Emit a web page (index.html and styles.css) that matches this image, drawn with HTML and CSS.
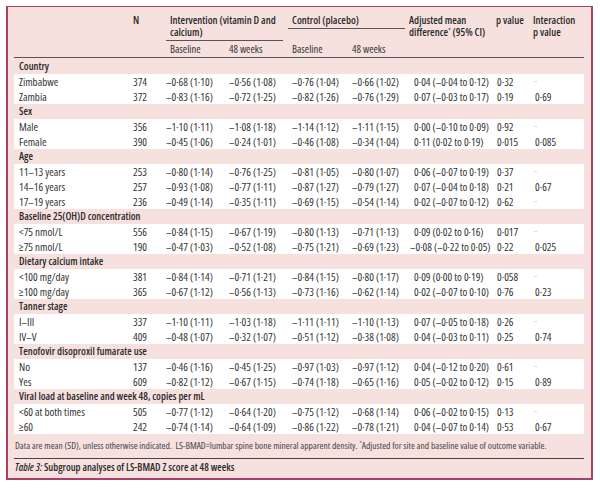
FILE: index.html
```html
<!DOCTYPE html>
<html lang="en">
<head>
<meta charset="utf-8">
<title>Table 3</title>
<link rel="stylesheet" href="styles.css">
</head>
<body>
<div class="panel">
  <table class="data">
    <colgroup>
      <col class="c-label"><col class="c-n"><col class="c-ib"><col class="c-iw"><col class="c-cb"><col class="c-cw"><col class="c-adj"><col class="c-p"><col class="c-int">
    </colgroup>
    <thead>
      <tr class="head1">
        <th rowspan="2" class="hcell"></th>
        <th rowspan="2" class="hcell">N</th>
        <th colspan="2" class="group"><div class="group-label int">Intervention (vitamin D and<br>calcium)</div></th>
        <th colspan="2" class="group"><div class="group-label ctl">Control (placebo)</div></th>
        <th rowspan="2" class="hcell pad4">Adjusted mean<br>difference<sup>*</sup> (95% CI)</th>
        <th rowspan="2" class="hcell">p value</th>
        <th rowspan="2" class="hcell">Interaction<br>p value</th>
      </tr>
      <tr class="head2">
        <th class="pad4">Baseline</th>
        <th>48 weeks</th>
        <th class="pad4">Baseline</th>
        <th>48 weeks</th>
      </tr>
    </thead>
    <tbody>
      <tr class="section first"><th colspan="9">Country</th></tr>
      <tr class="row"><td class="label">Zimbabwe</td><td>374</td><td>–0·68 (1·10)</td><td>–0·56 (1·08)</td><td class="pad4">–0·76 (1·04)</td><td>–0·66 (1·02)</td><td class="pos">0·04 (–0·04 to 0·12)</td><td class="pv">0·32</td><td class="na">··</td></tr>
      <tr class="row"><td class="label">Zambia</td><td>372</td><td>–0·83 (1·16)</td><td>–0·72 (1·25)</td><td class="pad4">–0·82 (1·26)</td><td>–0·76 (1·29)</td><td class="pos">0·07 (–0·03 to 0·17)</td><td class="pv">0·19</td><td class="iv">0·69</td></tr>

      <tr class="section"><th colspan="9">Sex</th></tr>
      <tr class="row"><td class="label">Male</td><td>356</td><td>–1·10 (1·11)</td><td>–1·08 (1·18)</td><td class="pad4">–1·14 (1·12)</td><td>–1·11 (1·15)</td><td class="pos">0·00 (–0·10 to 0·09)</td><td class="pv">0·92</td><td class="na">··</td></tr>
      <tr class="row"><td class="label">Female</td><td>390</td><td>–0·45 (1·06)</td><td>–0·24 (1·01)</td><td class="pad4">–0·46 (1·08)</td><td>–0·34 (1·04)</td><td class="pos">0·11 (0·02 to 0·19)</td><td class="pv">0·015</td><td class="iv">0·085</td></tr>

      <tr class="section"><th colspan="9">Age</th></tr>
      <tr class="row"><td class="label">11–13 years</td><td>253</td><td>–0·80 (1·14)</td><td>–0·76 (1·25)</td><td class="pad4">–0·81 (1·05)</td><td>–0·80 (1·07)</td><td class="pos">0·06 (–0·07 to 0·19)</td><td class="pv">0·37</td><td class="na">··</td></tr>
      <tr class="row"><td class="label">14–16 years</td><td>257</td><td>–0·93 (1·08)</td><td>–0·77 (1·11)</td><td class="pad4">–0·87 (1·27)</td><td>–0·79 (1·27)</td><td class="pos">0·07 (–0·04 to 0·18)</td><td class="pv">0·21</td><td class="iv">0·67</td></tr>
      <tr class="row"><td class="label">17–19 years</td><td>236</td><td>–0·49 (1·14)</td><td>–0·35 (1·11)</td><td class="pad4">–0·69 (1·15)</td><td>–0·54 (1·14)</td><td class="pos">0·02 (–0·07 to 0·12)</td><td class="pv">0·62</td><td class="na">··</td></tr>

      <tr class="section"><th colspan="9">Baseline 25(OH)D concentration</th></tr>
      <tr class="row"><td class="label">&lt;75 nmol/L</td><td>556</td><td>–0·84 (1·15)</td><td>–0·67 (1·19)</td><td class="pad4">–0·80 (1·13)</td><td>–0·71 (1·13)</td><td class="pos">0·09 (0·02 to 0·16)</td><td class="pv">0·017</td><td class="na">··</td></tr>
      <tr class="row"><td class="label">≥75 nmol/L</td><td>190</td><td>–0·47 (1·03)</td><td>–0·52 (1·08)</td><td class="pad4">–0·75 (1·21)</td><td>–0·69 (1·23)</td><td class="neg">–0·08 (–0·22 to 0·05)</td><td class="pv">0·22</td><td class="iv">0·025</td></tr>

      <tr class="section"><th colspan="9">Dietary calcium intake</th></tr>
      <tr class="row"><td class="label">&lt;100 mg/day</td><td>381</td><td>–0·84 (1·14)</td><td>–0·71 (1·21)</td><td class="pad4">–0·84 (1·15)</td><td>–0·80 (1·17)</td><td class="pos">0·09 (0·00 to 0·19)</td><td class="pv">0·058</td><td class="na">··</td></tr>
      <tr class="row"><td class="label">≥100 mg/day</td><td>365</td><td>–0·67 (1·12)</td><td>–0·56 (1·13)</td><td class="pad4">–0·73 (1·16)</td><td>–0·62 (1·14)</td><td class="pos">0·02 (–0·07 to 0·10)</td><td class="pv">0·76</td><td class="iv">0·23</td></tr>

      <tr class="section"><th colspan="9">Tanner stage</th></tr>
      <tr class="row"><td class="label">I–III</td><td>337</td><td>–1·10 (1·11)</td><td>–1·03 (1·18)</td><td class="pad4">–1·11 (1·11)</td><td>–1·10 (1·13)</td><td class="pos">0·07 (–0·05 to 0·18)</td><td class="pv">0·26</td><td class="na">··</td></tr>
      <tr class="row"><td class="label">IV–V</td><td>409</td><td>–0·48 (1·07)</td><td>–0·32 (1·07)</td><td class="pad4">–0·51 (1·12)</td><td>–0·38 (1·08)</td><td class="pos">0·04 (–0·03 to 0·11)</td><td class="pv">0·25</td><td class="iv">0·74</td></tr>

      <tr class="section"><th colspan="9">Tenofovir disoproxil fumarate use</th></tr>
      <tr class="row"><td class="label">No</td><td>137</td><td>–0·46 (1·16)</td><td>–0·45 (1·25)</td><td class="pad4">–0·97 (1·03)</td><td>–0·97 (1·12)</td><td class="pos">0·04 (–0·12 to 0·20)</td><td class="pv">0·61</td><td class="na">··</td></tr>
      <tr class="row"><td class="label">Yes</td><td>609</td><td>–0·82 (1·12)</td><td>–0·67 (1·15)</td><td class="pad4">–0·74 (1·18)</td><td>–0·65 (1·16)</td><td class="pos">0·05 (–0·02 to 0·12)</td><td class="pv">0·15</td><td class="iv">0·89</td></tr>

      <tr class="section"><th colspan="9">Viral load at baseline and week 48, copies per mL</th></tr>
      <tr class="row"><td class="label">&lt;60 at both times</td><td>505</td><td>–0·77 (1·12)</td><td>–0·64 (1·20)</td><td class="pad4">–0·75 (1·12)</td><td>–0·68 (1·14)</td><td class="pos">0·06 (–0·02 to 0·15)</td><td class="pv">0·13</td><td class="na">··</td></tr>
      <tr class="row"><td class="label">≥60</td><td>242</td><td>–0·74 (1·14)</td><td>–0·64 (1·09)</td><td class="pad4">–0·86 (1·22)</td><td>–0·78 (1·21)</td><td class="pos">0·04 (–0·07 to 0·14)</td><td class="pv">0·53</td><td class="iv">0·67</td></tr>
    </tbody>
  </table>
  <p class="note">Data are mean (SD), unless otherwise indicated.&nbsp; LS-BMAD=lumbar spine bone mineral apparent density. <sup>*</sup>Adjusted for site and baseline value of outcome variable.</p>
  <p class="caption"><i>Table 3:</i> Subgroup analyses of LS-BMAD Z score at 48 weeks</p>
</div>
</body>
</html>
```

FILE: styles.css
```css
html, body {
  margin: 0;
  padding: 0;
  background: #ffffff;
}

body {
  font-family: "Open Sans", "Liberation Sans", Arial, sans-serif;
  font-stretch: 75%;
  color: #2b2b2b;
}

.panel {
  margin: 6px 0 0 6px;
  width: 570px;
  padding: 7px 7px 5px 6px;
  background: #f6e1df;
  border: 2px solid #a8416a;
  border-top-width: 1px;
}

.data {
  width: 570px;
  table-layout: fixed;
  border-collapse: collapse;
  font-size: 11px;
}

.c-label { width: 119px; }
.c-n { width: 33px; }
.c-ib { width: 63px; }
.c-iw { width: 59px; }
.c-cb { width: 64px; }
.c-cw { width: 53px; }
.c-adj { width: 91px; }
.c-p { width: 37px; }
.c-int { width: 51px; }

.data th,
.data td {
  padding: 0;
  text-align: left;
  white-space: nowrap;
}

.head1 th {
  vertical-align: top;
  font-size: 10.5px;
  font-weight: 600;
  line-height: 12px;
  color: #2b2b2b;
}

.head1 .hcell {
  border-bottom: 1px solid #555;
}

.group-label {
  padding: 0 0 2px 4px;
  border-bottom: 1px solid #555;
}

.group-label.int { margin-right: 5px; }

.head2 th {
  font-size: 10.5px;
  font-weight: normal;
  line-height: 12px;
  padding-top: 2px;
  padding-bottom: 2px;
  border-bottom: 1px solid #555;
  color: #333;
}

.pad4 { padding-left: 4px !important; }

sup {
  font-size: 6px;
  line-height: 0;
  vertical-align: 4px;
}

.section th {
  font-size: 10.4px;
  font-weight: 600;
  line-height: 15px;
  height: 15px;
  padding-left: 5px;
}

.section.first th {
  padding-top: 1px;
}

.row {
  background: #ffffff;
}

.row td {
  line-height: 15px;
  height: 15px;
  color: #333;
}

.row td.label { padding-left: 5px; }
.row td.pos { padding-left: 9px; }
.row td.neg { padding-left: 5px; }
.row td.pv { padding-left: 1px; }
.row td.iv { padding-left: 2px; }
.row td.na {
  padding-left: 1px;
  font-size: 7px;
  color: #888;
}

.note {
  margin: 6px 0 0 1px;
  font-size: 9.5px;
  line-height: 11px;
  color: #444;
  white-space: nowrap;
}

.caption {
  margin: 7px 0 0 0;
  padding: 2px 0 0 1px;
  border-top: 1px solid #444;
  font-size: 10.3px;
  line-height: 12px;
  font-weight: 600;
  color: #2b2b2b;
}
```
